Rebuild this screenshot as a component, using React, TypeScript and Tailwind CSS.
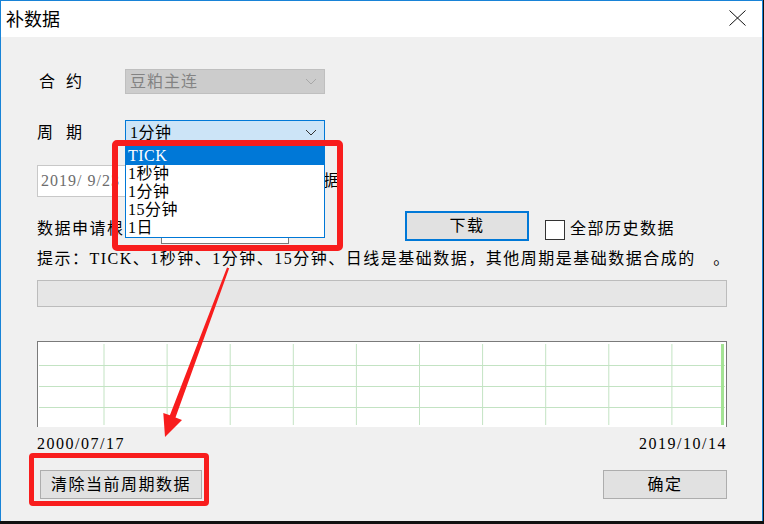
import { useState } from 'react'

const periods = ['TICK', '1秒钟', '1分钟', '15分钟', '1日']

const Chevron = ({ color }: { color: string }) => (
    <svg width="12" height="7" viewBox="0 0 12 7" fill="none">
        <path d="M1 1 L6 6 L11 1" stroke={color} strokeWidth="1" />
    </svg>
)

const Grid = () => {
    const cols = Array.from({ length: 10 }, (_, i) => 66 + i * 63.1)
    return (
        <svg width="688" height="85" className="block">
            {cols.map((x) => (
                <line key={x} x1={x} y1="2" x2={x} y2="83" stroke="#c3e3c3" strokeWidth="1" />
            ))}
            {[23, 44, 65].map((y) => (
                <line key={y} x1="1" y1={y + 0.5} x2="687" y2={y + 0.5} stroke="#c3e3c3" strokeWidth="1" />
            ))}
            <rect x="683" y="2" width="3" height="81" fill="#a4e394" />
        </svg>
    )
}

const App = () => {
    const [selected] = useState(0)

    return (
        <div className="relative w-[764px] h-[524px] overflow-hidden bg-[#111] font-['Liberation_Serif','Noto_Sans_CJK_SC',serif] text-[16px] text-black">
            <div className="w-[763px] h-[521px] border-l border-t border-r border-[#1883d7] bg-[#f0f0f0] flex flex-col">
                {/* title bar */}
                <div className="h-[36px] bg-white flex items-center justify-between pl-[5px] pr-[16px]">
                    <span className="font-['Noto_Sans_CJK_SC',sans-serif] text-[18px] leading-none -mt-[3px]">补数据</span>
                    <svg width="17" height="16" viewBox="0 0 17 16" className="-mt-[2px]">
                        <path d="M0.5 0.5 L16.5 15.5 M16.5 0.5 L0.5 15.5" stroke="#111" strokeWidth="1" />
                    </svg>
                </div>

                <div className="flex flex-col pl-[36px] pr-[35px] tracking-[1.5px]">
                    {/* contract */}
                    <div className="mt-[32px] h-[25px] flex items-center">
                        <div className="w-[88px] flex pl-[2px]">
                            <span className="w-[27px]">合</span>
                            <span>约</span>
                        </div>
                        <div className="w-[200px] h-[25px] bg-[#cccccc] border border-[#bfbfbf] flex items-center justify-between pl-[4px] pr-[7px] text-[#838383] tracking-[1px]">
                            <span>豆粕主连</span>
                            <Chevron color="#a8a8a8" />
                        </div>
                    </div>

                    {/* period */}
                    <div className="mt-[26px] h-[25px] flex items-center">
                        <div className="w-[88px] flex">
                            <span className="w-[29px]">周</span>
                            <span>期</span>
                        </div>
                        <div className="w-[200px] h-[25px] bg-[#cce4f7] border border-[#0078d7] flex items-center justify-between pl-[4px] pr-[7px] tracking-[0.5px]">
                            <span>1分钟</span>
                            <Chevron color="#333" />
                        </div>
                    </div>

                    {/* start date */}
                    <div className="mt-[20px] h-[32px] w-[304px] flex items-center justify-between">
                        <div className="w-[140px] h-[32px] bg-white border border-[#c8c8c8] flex items-center pl-[3px] text-[#6d6d6d] whitespace-pre tracking-[1px]">
                            2019/ 9/23
                        </div>
                        <span>开始补数据</span>
                    </div>

                    {/* request row */}
                    <div className="mt-[14px] h-[33px] flex items-start">
                        <span className="mt-[8px] leading-[20px] w-[124px]">数据申请根</span>
                        <div className="mt-[7px] w-[128px] h-[26px] bg-white border border-[#7a7a7a]" />
                        <button className="ml-[116px] w-[124px] h-[30px] bg-[#e1e1e1] border-2 border-[#0078d7] flex items-center justify-center">
                            下载
                        </button>
                        <div className="ml-[16px] mt-[9px] w-[20px] h-[20px] bg-white border border-[#333]" />
                        <span className="ml-[5px] mt-[8px] leading-[20px]">全部历史数据</span>
                    </div>

                    {/* hint */}
                    <div className="mt-[5px] h-[20px] leading-[20px] whitespace-nowrap">
                        提示：TICK、1秒钟、1分钟、15分钟、日线是基础数据，其他周期是基础数据合成的{' '}
                        <span className="ml-[12px]">。</span>
                    </div>

                    {/* progress */}
                    <div className="mt-[11px] h-[27px] bg-[#e6e6e6] border border-[#bcbcbc]" />

                    {/* chart */}
                    <div className="mt-[34px] h-[86px] bg-white border-l border-t border-r border-[#7a7a7a]">
                        <Grid />
                    </div>

                    {/* dates */}
                    <div className="mt-[7px] h-[20px] leading-[20px] flex justify-between">
                        <span>2000/07/17</span>
                        <span>2019/10/14</span>
                    </div>

                    {/* buttons */}
                    <div className="mt-[16px] h-[29px] flex justify-between">
                        <button className="ml-[3px] w-[162px] h-[29px] bg-[#e1e1e1] border border-[#adadad]">清除当前周期数据</button>
                        <button className="w-[124px] h-[29px] bg-[#e1e1e1] border border-[#adadad]">确定</button>
                    </div>
                </div>
            </div>

            {/* open period list */}
            <div className="absolute left-[125px] top-[145px] w-[200px] h-[93px] bg-white border border-[#0078d7] flex flex-col tracking-[0.5px]">
                {periods.map((p, i) => (
                    <div
                        key={p}
                        className={`${i === 0 ? 'h-[19px]' : 'h-[18px]'} ${i === selected ? 'bg-[#0078d7] text-white' : ''} flex items-center pl-[2px]`}
                    >
                        {p}
                    </div>
                ))}
            </div>

            {/* annotations */}
            <div className="absolute left-[112px] top-[140px] w-[231px] h-[111px] border-[6px] border-[#f81d1d] rounded-[5px]" />
            <div className="absolute left-[29px] top-[453px] w-[180px] h-[53px] border-[5px] border-[#f81d1d] rounded-[4px]" />
            <svg className="absolute left-0 top-0 pointer-events-none" width="764" height="524">
                <polygon
                    points="227,267.5 229.2,268.3 175.5,417.4 182,420 165,437 163.3,413 169.9,415.3"
                    fill="#f81d1d"
                />
            </svg>
        </div>
    )
}

export default App
